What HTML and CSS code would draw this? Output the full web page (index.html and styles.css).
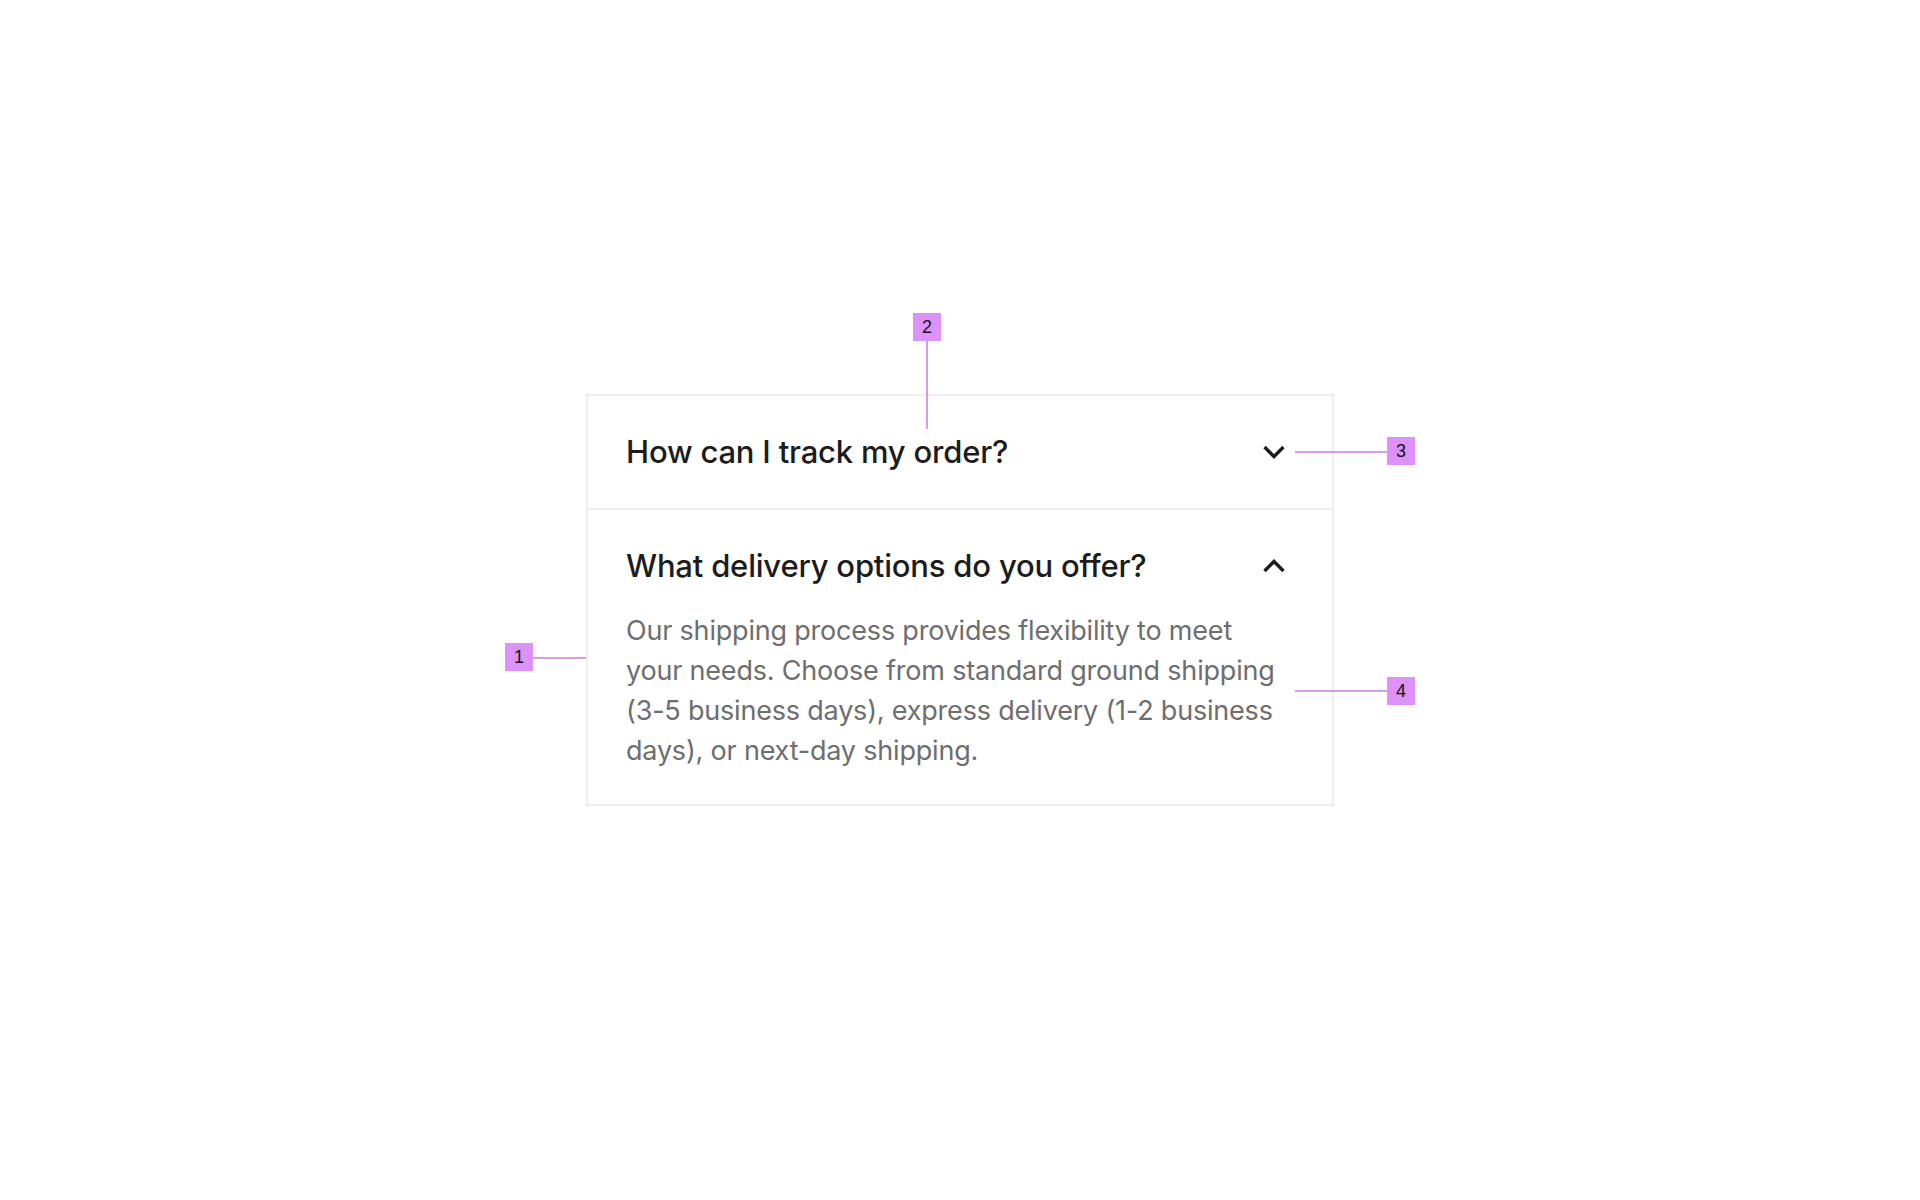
FILE: index.html
```html
<!DOCTYPE html>
<html lang="en">
<head>
  <meta charset="UTF-8" />
  <meta name="viewport" content="width=device-width, initial-scale=1.0"/>
  <title>Accordion anatomy</title>
  <link rel="stylesheet" href="styles.css">
</head>
<body>
  <div class="accordion">
    <!-- Collapsed item -->
    <div class="item">
      <div class="item-head">
        <span class="item-title">How can I track my order?</span>
        <svg class="chevron" viewBox="0 0 24 24" width="24" height="24">
          <path d="M2.5 7 L12 16.5 L21.5 7" />
        </svg>
      </div>
    </div>

    <!-- Expanded item -->
    <div class="item open">
      <div class="item-head">
        <span class="item-title">What delivery options do you offer?</span>
        <svg class="chevron" viewBox="0 0 24 24" width="24" height="24">
          <path d="M2.5 17 L12 7.5 L21.5 17" />
        </svg>
      </div>
      <p class="item-body">Our shipping process provides flexibility to meet your needs. Choose from standard ground shipping (3-5 business days), express delivery (1-2 business days), or next-day shipping.</p>
    </div>

    <!-- Callouts -->
    <span class="marker m1">1</span>
    <span class="leader h l1"></span>
    <span class="marker m2">2</span>
    <span class="leader v l2"></span>
    <span class="marker m3">3</span>
    <span class="leader h l3"></span>
    <span class="marker m4">4</span>
    <span class="leader h l4"></span>
  </div>
</body>
</html>
```

FILE: styles.css
```css
body {
  font-family: Inter, "Liberation Sans", Arial, sans-serif;
  background: #fff;
  margin: 0;
  min-height: 100vh;
  display: flex;
  justify-content: center;
  align-items: center;
}

.accordion {
  position: relative;
  width: 744px;
  border: 2px solid #eeeeee;
  background: #fff;
}

.item + .item {
  border-top: 2px solid #eeeeee;
}

.item-head {
  display: flex;
  align-items: center;
  justify-content: space-between;
  padding: 36px 46px 36px 38px;
}

.item-title {
  font-size: 31px;
  font-weight: 500;
  line-height: 40px;
  color: #1c1c1c;
  letter-spacing: -0.2px;
}

.chevron {
  flex-shrink: 0;
  fill: none;
  stroke: #1c1c1c;
  stroke-width: 3.4;
}

.item-body {
  margin: -11px 0 0;
  padding: 0 40px 33px 38px;
  font-size: 27px;
  line-height: 40px;
  color: #6e6e6e;
  letter-spacing: -0.2px;
}

.marker {
  position: absolute;
  width: 28px;
  height: 28px;
  background: #dc92f8;
  color: #111;
  font-family: "Liberation Sans", Arial, sans-serif;
  font-size: 18px;
  line-height: 28px;
  text-align: center;
}

.leader {
  position: absolute;
  background: #d99cea;
}

.leader.h {
  height: 2px;
}

.leader.v {
  width: 2px;
}

.m1 { left: -83px; top: 247px; }
.l1 { left: -55px; top: 261px; width: 53px; }

.m2 { left: 325px; top: -83px; }
.l2 { left: 338px; top: -55px; height: 88px; }

.m3 { left: 799px; top: 41px; }
.l3 { left: 707px; top: 55px; width: 92px; }

.m4 { left: 799px; top: 281px; }
.l4 { left: 707px; top: 294px; width: 92px; }
```
